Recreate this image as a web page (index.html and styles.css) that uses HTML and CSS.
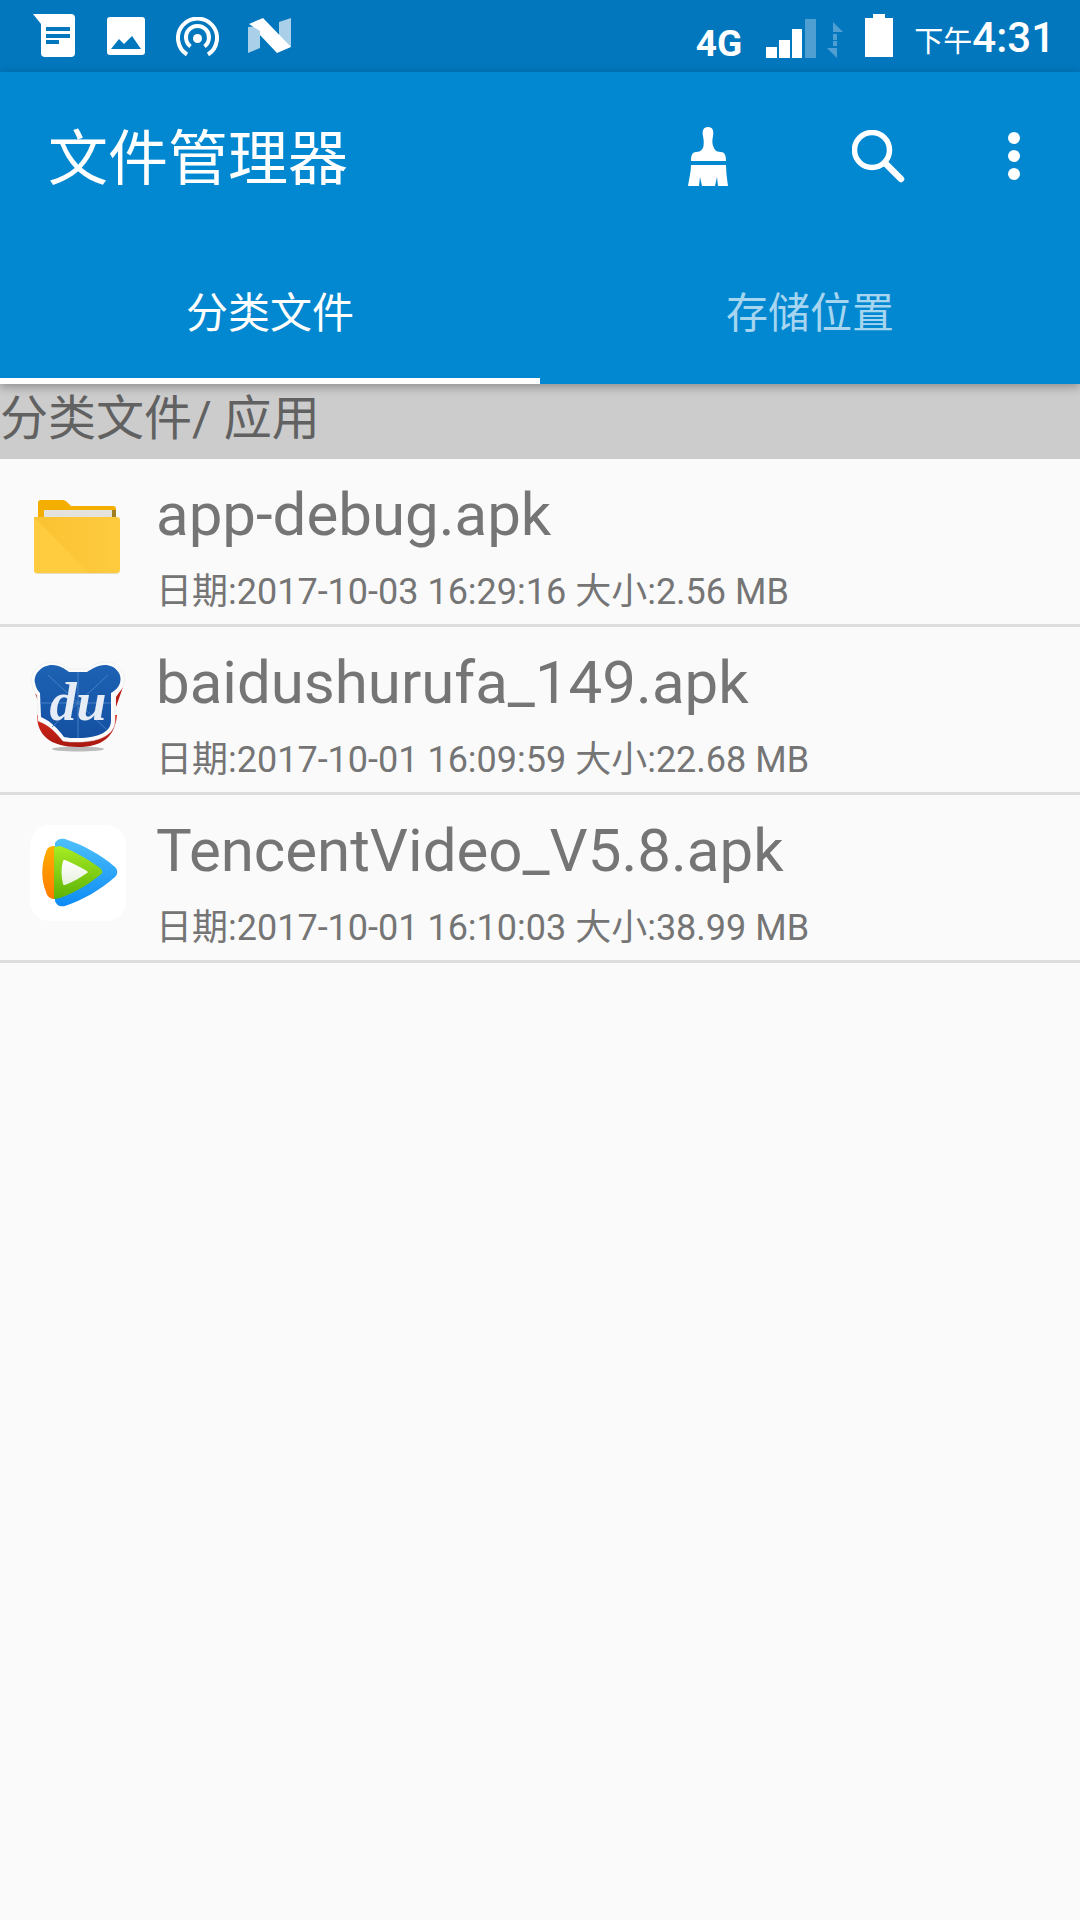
FILE: index.html
```html
<!DOCTYPE html>
<html lang="zh-CN">
    <head>
        <meta charset="UTF-8">
        <title>文件管理器</title>
        <link rel="stylesheet" href="styles.css">
    </head>
    <body>
        <div class="statusbar">
            <div class="status-left">
                <svg class="ic-msg" viewBox="0 0 42 43"><path fill="#fff" d="M0 0H38Q42 0 42 4V39Q42 43 38 43H12Q8 43 8 39V10Z"/><path fill="#0277bd" d="M13 13H37V17H13ZM13 20H37V24H13ZM13 26H26V30H13Z"/></svg>
                <svg class="ic-img" viewBox="0 0 38 38"><rect width="38" height="38" rx="3" fill="#fff"/><path fill="#0277bd" d="M4 32 12 22 17 27 25 19 34 32Z"/></svg>
                <svg class="ic-cast" viewBox="0 0 43 40" fill="none" stroke="#fff" stroke-width="4"><path d="M11 37.5A19.5 19.5 0 1 1 32 37.5"/><path d="M14.5 29.5A11.5 11.5 0 1 1 28.5 29.5"/><circle cx="21.5" cy="21.5" r="4.5" fill="#fff" stroke="none"/></svg>
                <svg class="ic-n" viewBox="0 0 43 36"><path fill="#a9d0e8" d="M0 9 12 8V30L0 35ZM31 4 43 0V29L31 23Z"/><path fill="#fff" d="M1 6 15 0 43 29 29 35 12 17V13Z"/></svg>
            </div>
            <div class="status-right">
                <span class="net">4G</span>
                <svg class="ic-signal" viewBox="0 0 50 39"><path fill="#fff" d="M0 28H11V39H0ZM13 21H24V39H13ZM26 10H36V39H26Z"/><path fill="#4f9fd3" d="M39 0H50V39H39Z"/></svg>
                <svg class="ic-arrows" viewBox="0 0 16 36"><path fill="#4f9fd3" d="M6 0 16 10H6ZM6 12H10V18H6ZM10 36 0 26H10ZM6 19H10V24H6Z"/></svg>
                <svg class="ic-batt" viewBox="0 0 28 43"><path fill="#fff" d="M8 0H20V4H28V43H0V4H8Z"/></svg>
                <span class="clock"><span class="clock-ampm">下午</span>4:31</span>
            </div>
        </div>
        <header class="appbar">
            <div class="toolbar">
                <h1 class="title">文件管理器</h1>
                <svg class="ic-brush" viewBox="0 0 40 59"><path fill="#fff" d="M20 0C25 0 26 4 25 9 24 14 24 17 26 21 27 24 30 25 33 25 37 25 38 29 38 34H3C3 29 4 25 8 25 11 25 13 24 15 21 16 17 16 14 15 9 14 4 15 0 20 0ZM3 38H38C38 45 39 52 40 59H30L29 50 27 59H14L12 50 11 59H0C1 52 3 45 3 38Z"/></svg>
                <svg class="ic-search" viewBox="0 0 53 53" fill="none" stroke="#fff"><circle cx="20" cy="20" r="17.5" stroke-width="5.5"/><path d="M33 33 49 49" stroke-width="6.5" stroke-linecap="round"/></svg>
                <svg class="ic-more" viewBox="0 0 12 48"><circle cx="6" cy="6" r="6" fill="#fff"/><circle cx="6" cy="24" r="6" fill="#fff"/><circle cx="6" cy="42" r="6" fill="#fff"/></svg>
            </div>
            <div class="tabs">
                <div class="tab tab-active">分类文件</div>
                <div class="tab">存储位置</div>
            </div>
        </header>
        <div class="crumb">分类文件/ 应用</div>
        <ul class="files">
            <li class="file">
                <svg class="file-icon" viewBox="0 0 96 96">
                    <defs>
                        <linearGradient id="fold"><stop offset="0" stop-color="#fac232"/><stop offset="1" stop-color="#fecb3f"/></linearGradient>
                    </defs>
                    <path fill="#f4ae00" d="M8 32V14Q8 11 11 11H33Q35 11 37 13L41 17H83Q86 17 86 20V32Z"/>
                    <path fill="#a07f22" d="M82 21H86V30H82Z"/>
                    <rect x="14" y="21" width="68" height="8" fill="#e4e2dc"/>
                    <path fill="url(#fold)" d="M4 28H87Q90 28 90 31V81Q90 84 87 84H7Q4 84 4 81Z"/>
                    <path fill="#ffcc40" d="M4 28 59 84H7Q4 84 4 81Z"/>
                    <path fill="#e6dcc0" d="M5 84H89Q88 85 87 85H7Q6 85 5 84Z"/>
                </svg>
                <div class="file-text">
                    <div class="file-name">app-debug.apk</div>
                    <div class="file-meta">日期:2017-10-03 16:29:16 大小:2.56 MB</div>
                </div>
            </li>
            <li class="file">
                <svg class="file-icon" viewBox="0 0 96 96">
                    <defs>
                        <linearGradient id="blue" x1="0" y1="0" x2="0" y2="1"><stop offset="0" stop-color="#1d62b4"/><stop offset="1" stop-color="#1450a2"/></linearGradient>
                        <linearGradient id="red" x1="0" y1="0" x2="0" y2="1"><stop offset="0" stop-color="#d8281c"/><stop offset="1" stop-color="#a81810"/></linearGradient>
                    </defs>
                    <ellipse cx="48" cy="92" rx="26" ry="2.5" fill="#bbb"/>
                    <path fill="url(#red)" d="M7 58C7 78 20 90 48 90 72 90 85 80 87 58Z"/>
                    <path fill="#b81c14" d="M3 30 10 40V50ZM93 30 86 40V50Z"/>
                    <path fill="#fbfbfb" stroke="#e6e6e6" stroke-width="0.5" d="M22 5C30 5 35 9 38 12H58C62 9 67 5 75 5 88 5 97 16 94 27 92 33 88 36 85 38V64C85 76 72 85 48 85 42 85 38 85 33 84 26 76 20 68 8 64L7 38C4 36 3 33 2 27-1 16 9 5 22 5Z"/>
                    <path fill="url(#blue)" d="M22 8C30 8 35 12 39 15H57C62 12 67 8 75 8 85 8 93 17 90 26 88 32 84 34 81 36V64C81 74 70 81 48 81 42 81 38 81 34 80 28 72 22 65 11 60L10 36C8 34 6 31 5 26 3 17 12 8 22 8Z"/>
                    <path fill="none" stroke="#4580c6" stroke-width="1" d="M48 15V81M10 46H81M18 18 76 72M78 18 22 70"/>
                    <text class="du" x="48" y="63" text-anchor="middle">du</text>
                </svg>
                <div class="file-text">
                    <div class="file-name">baidushurufa_149.apk</div>
                    <div class="file-meta">日期:2017-10-01 16:09:59 大小:22.68 MB</div>
                </div>
            </li>
            <li class="file">
                <svg class="file-icon" viewBox="0 0 96 96">
                    <defs>
                        <linearGradient id="tv-blue" x1="0" y1="0" x2="0" y2="1"><stop offset="0" stop-color="#4dc0fb"/><stop offset="1" stop-color="#0c8bf5"/></linearGradient>
                        <linearGradient id="tv-org" x1="0" y1="0" x2="0" y2="1"><stop offset="0" stop-color="#ffae00"/><stop offset="1" stop-color="#ff7a00"/></linearGradient>
                        <linearGradient id="tv-grn" x1="0" y1="0" x2="0" y2="1"><stop offset="0" stop-color="#a8ec24"/><stop offset="1" stop-color="#5cb206"/></linearGradient>
                        <linearGradient id="tv-wht" x1="0" y1="0" x2="0" y2="1"><stop offset="0" stop-color="#fff"/><stop offset="1" stop-color="#e6f1dc"/></linearGradient>
                    </defs>
                    <rect width="96" height="96" rx="20" fill="#fff"/>
                    <path fill="url(#tv-blue)" d="M25 18C27 14 31 13 35 14 53 20 70 29 85 42 88 45 88 49 85 52 70 65 53 75 35 81 31 82 27 81 25 76Z"/>
                    <path fill="url(#tv-org)" d="M24 21H25V74H24C20 74 17 71 16 67 11 55 11 40 16 27 17 23 20 21 24 21Z"/>
                    <path fill="url(#tv-grn)" d="M24 22 30 21C46 27 59 35 70 43 73 46 73 48 70 50 59 59 46 67 30 73L24 74Z"/>
                    <path fill="url(#tv-wht)" d="M33 36C33 35 34 35 35 35 43 38 50 42 57 46 58 47 58 48 57 48 50 53 43 57 35 60 34 60 33 60 33 59 31 51 31 43 33 36Z"/>
                </svg>
                <div class="file-text">
                    <div class="file-name">TencentVideo_V5.8.apk</div>
                    <div class="file-meta">日期:2017-10-01 16:10:03 大小:38.99 MB</div>
                </div>
            </li>
        </ul>
    </body>
</html>
```

FILE: styles.css
```css
body {
    margin: 0;
    height: 1920px;
    overflow: hidden;
    background-color: #fafafa;
    font-family: Roboto, "Noto Sans CJK SC", sans-serif;
}
svg {
    display: block;
    flex: none;
}

.statusbar {
    height: 72px;
    background-color: #0277bd;
    color: white;
    display: flex;
    justify-content: space-between;
    align-items: flex-start;
    padding: 0 25px 0 33px;
}
.status-left {
    display: flex;
    align-items: flex-start;
    padding-top: 14px;
}
.ic-msg { width: 42px; height: 43px; }
.ic-img { width: 38px; height: 38px; margin: 3px 0 0 32px; }
.ic-cast { width: 43px; height: 40px; margin: 3px 0 0 31px; }
.ic-n { width: 43px; height: 36px; margin: 4px 0 0 29px; }
.status-right {
    display: flex;
    align-items: flex-start;
}
.net {
    font-size: 37px;
    font-weight: 700;
    line-height: 38px;
    margin-top: 25px;
}
.ic-signal { width: 50px; height: 39px; margin: 19px 0 0 24px; }
.ic-arrows { width: 16px; height: 36px; margin: 22px 0 0 11px; }
.ic-batt { width: 28px; height: 43px; margin: 14px 0 0 22px; }
.clock {
    font-size: 42px;
    font-weight: 500;
    line-height: 48px;
    margin: 14px 0 0 21px;
    white-space: nowrap;
}
.clock-ampm {
    font-size: 29px;
    font-weight: 400;
}

.appbar {
    position: relative;
    background-color: #0288d1;
    color: white;
    box-shadow: 0 3px 9px rgba(0, 0, 0, 0.3);
}
.toolbar {
    height: 168px;
    display: flex;
    align-items: center;
    padding: 0 60px 0 48px;
}
.title {
    flex: 1;
    margin: 0 0 6px;
    font-size: 60px;
    font-weight: 400;
}
.ic-brush { width: 40px; height: 59px; }
.ic-search { width: 53px; height: 53px; margin-left: 124px; }
.ic-more { width: 12px; height: 48px; margin-left: 103px; }

.tabs {
    height: 144px;
    display: flex;
}
.tab {
    flex: 1;
    display: flex;
    align-items: center;
    justify-content: center;
    padding-bottom: 6px;
    font-size: 42px;
    color: #a6d5ef;
}
.tab-active {
    color: white;
    box-shadow: inset 0 -6px 0 white;
}

.crumb {
    height: 75px;
    line-height: 70px;
    background-color: #ccc;
    color: #616161;
    font-size: 48px;
}

.files {
    margin: 0;
    padding: 0;
    list-style: none;
}
.file {
    height: 165px;
    border-bottom: 3px solid #ddd;
    display: flex;
    align-items: center;
    padding-left: 30px;
}
.file-icon {
    width: 96px;
    height: 96px;
    margin-bottom: 10px;
}
.file-text {
    margin: 10px 0 0 30px;
    color: #757575;
}
.file-name {
    font-size: 60px;
    line-height: 70px;
}
.file-meta {
    font-size: 36px;
    line-height: 44px;
    margin-top: 20px;
}
.du {
    font: italic 700 54px "Liberation Serif", serif;
    fill: #e6edf6;
}
```
